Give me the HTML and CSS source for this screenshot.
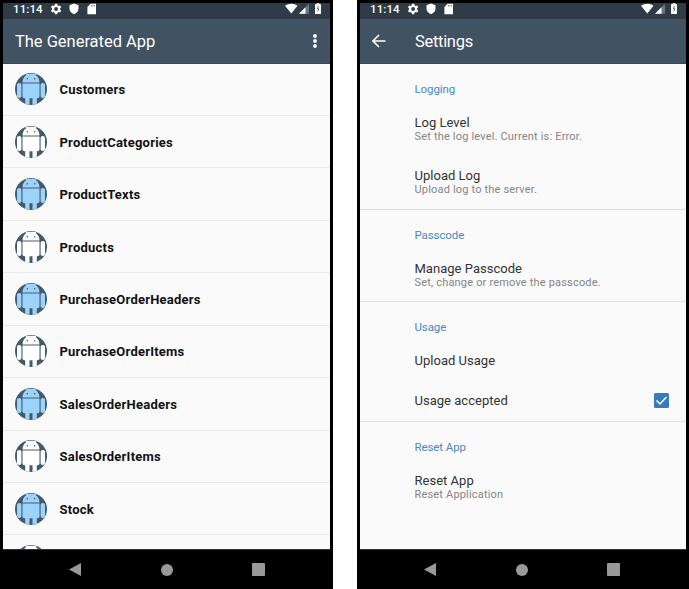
FILE: index.html
```html
<!DOCTYPE html>
<html lang="en">
<head>
<meta charset="utf-8">
<title>The Generated App</title>
<link rel="stylesheet" href="styles.css">
</head>
<body>
<svg width="0" height="0" class="defs">
  <defs>
    <clipPath id="disc"><circle cx="16" cy="16" r="16"/></clipPath>
    <symbol id="droid" viewBox="0 0 32 32">
      <g clip-path="url(#disc)">
        <rect width="32" height="32" fill="#445a6c"/>
        <path fill="currentColor" d="M7.500 9.600C7.500 6 9.200 3.300 11.400 2L10 .8h12L20.600 2c2.200 1.300 3.900 4 3.900 7.600zM7.500 10.600h17v12.800q0 1.800-2 1.800h-.7V32h-4.300v-6.800h-3V32h-4.300v-6.800H9.500q-2 0-2-1.800zM2 11.700q0-1.700 2.200-1.700t2.200 1.700v11.500q0 1.800-2.200 1.800T2 23.200zM25.600 11.700q0-1.700 2.200-1.700t2.200 1.700v11.500q0 1.800-2.200 1.800t-2.200-1.800z"/>
        <circle cx="12.300" cy="5.800" r=".8" fill="#445a6c"/><circle cx="19.700" cy="5.800" r=".8" fill="#445a6c"/>
      </g>
    </symbol>
    <symbol id="left-status" viewBox="0 0 84 15">
      <path fill="#fff" fill-rule="evenodd" d="M42 .8h2.200l.4 1.500 1 .6 1.500-.5 1.100 1.900-1.100 1.100v1.200l1.100 1.100-1.100 1.900-1.500-.5-1 .6-.4 1.500H42l-.4-1.500-1-.6-1.500.5L38 7.700l1.100-1.100V5.400L38 4.300l1.100-1.900 1.500.5 1-.6zM43.100 4.100a1.900 1.900 0 1 0 0 3.800 1.900 1.900 0 0 0 0-3.800z"/>
      <path fill="#fff" d="M61 .6l4.500 1.700v3.500c0 2.500-1.900 4.600-4.500 5.500-2.600-.9-4.500-3-4.500-5.500V2.300z"/>
      <path fill="#fff" d="M77.600.8H83v10.400h-8.600V4z"/><path d="M78.500 2v1.500M80 2v1.500M81.500 2v1.500" stroke="#2f3b46" stroke-width=".6"/>
    </symbol>
    <symbol id="right-status" viewBox="0 0 40 15">
      <path fill="#fff" d="M0 2.800C3.500.2 9-.2 12.500 2.800L6.300 10.500z"/>
      <path fill="#6d7780" d="M24 .8v10H14z"/><path fill="#fff" d="M20.500 4.300v6.500H14z"/>
      <path fill="#fff" d="M31.500.2h3v1h1.500v9.800h-6V1.200h1.500z"/><path d="M33.500 3l-1.200 2.800h1.600L32.700 8.400" fill="none" stroke="#2f3b46" stroke-width=".7"/>
    </symbol>
  </defs>
</svg>
<main class="stage">
  <section class="phone">
    <div class="status"><span class="clock">11:14</span><svg class="sl"><use href="#left-status"/></svg><svg class="sr"><use href="#right-status"/></svg></div>
    <header class="bar"><h1 class="t-app">The Generated App</h1><svg class="more" viewBox="0 0 6 16"><g fill="#fff"><circle cx="3" cy="3" r="1.900"/><circle cx="3" cy="8" r="1.900"/><circle cx="3" cy="13" r="1.900"/></g></svg></header>
    <ul class="list">
      <li><svg class="droid blue"><use href="#droid"/></svg><span>Customers</span></li>
      <li><svg class="droid"><use href="#droid"/></svg><span>ProductCategories</span></li>
      <li><svg class="droid blue"><use href="#droid"/></svg><span>ProductTexts</span></li>
      <li><svg class="droid"><use href="#droid"/></svg><span>Products</span></li>
      <li><svg class="droid blue"><use href="#droid"/></svg><span>PurchaseOrderHeaders</span></li>
      <li><svg class="droid"><use href="#droid"/></svg><span>PurchaseOrderItems</span></li>
      <li><svg class="droid blue"><use href="#droid"/></svg><span>SalesOrderHeaders</span></li>
      <li><svg class="droid"><use href="#droid"/></svg><span>SalesOrderItems</span></li>
      <li><svg class="droid blue"><use href="#droid"/></svg><span>Stock</span></li>
      <li><svg class="droid"><use href="#droid"/></svg></li>
    </ul>
    <nav class="nav"><i class="back"></i><i class="home"></i><i class="recent"></i></nav>
  </section>
  <section class="phone">
    <div class="status"><span class="clock">11:14</span><svg class="sl"><use href="#left-status"/></svg><svg class="sr"><use href="#right-status"/></svg></div>
    <header class="bar"><svg class="arrow" viewBox="0 0 14 14"><path d="M13.500 7H1.500M7 1L1 7l6 6" fill="none" stroke="#fff" stroke-width="1.600"/></svg><h1 class="t-set">Settings</h1></header>
    <div class="settings">
      <section class="group g1"><h2>Logging</h2>
        <div class="item"><b>Log Level</b><p>Set the log level. Current is: Error.</p></div>
        <div class="item"><b>Upload Log</b><p>Upload log to the server.</p></div></section>
      <section class="group g2"><h2>Passcode</h2>
        <div class="item"><b>Manage Passcode</b><p>Set, change or remove the passcode.</p></div></section>
      <section class="group g3"><h2>Usage</h2>
        <div class="item single"><b>Upload Usage</b></div>
        <div class="item single check"><b>Usage accepted</b><svg class="box" viewBox="0 0 15 15"><rect width="15" height="15" rx="1.500" fill="#387bba"/><path d="M2.500 7.500l3.500 3.400 6.500-6.800" fill="none" stroke="#fff" stroke-width="1.500"/></svg></div></section>
      <section class="group g4"><h2>Reset App</h2>
        <div class="item"><b>Reset App</b><p>Reset Application</p></div></section>
    </div>
    <nav class="nav"><i class="back"></i><i class="home"></i><i class="recent"></i></nav>
  </section>
</main>
</body>
</html>
```
FILE: styles.css
```css
* { box-sizing: border-box; }
body { margin: 0; background: #fff; font-family: Roboto, "Noto Sans", sans-serif; overflow: hidden; }
h1, h2, p, ul { margin: 0; padding: 0; font-weight: 400; }
svg { display: block; flex: none; }
.defs { position: absolute; }
.stage { display: flex; gap: 24px; width: 690px; height: 589px; }
.phone { display: flex; flex-direction: column; flex: none; width: 333px; height: 589px; padding: 3px 3px 0; background: #000; white-space: nowrap; }
.phone + .phone { padding-right: 4px; }
.status { display: flex; height: 15.500px; flex: none; background: #2f3b46; color: #fff; }
.clock { flex: none; width: 35px; padding-left: 10px; font-size: 11.500px; font-weight: 500; line-height: 13px; letter-spacing: .1px; }
.sl { width: 84px; height: 15px; margin-left: -25px; }
.sr { width: 40px; height: 15px; margin-left: auto; margin-right: 5px; }
.bar { display: flex; align-items: center; height: 45px; flex: none; padding: 0 12px; background: #415262; border-bottom: 1px solid #33475a; color: #fff; }
.bar h1 { padding-top: 2px; font-size: 16.500px; line-height: 20px; letter-spacing: -.03px; }
.more { width: 6px; height: 16px; margin-left: auto; }
.arrow { width: 14px; height: 14px; }
.bar .t-set { margin-left: 29px; letter-spacing: -.3px; }
.list { flex: 1; overflow: hidden; list-style: none; background: #fafafa; }
.list li { display: flex; align-items: center; height: 52.450px; padding-left: 11.500px; border-bottom: 1px solid #e7e7e7; font-size: 13px; font-weight: 700; letter-spacing: .23px; color: #111; }
.list span { padding-top: 1px; }
.droid { width: 32px; height: 32px; margin-right: 13px; color: #fff; }
.blue { color: #9bd3fb; }
.settings { flex: 1; overflow: hidden; background: #fafafa; }
.group { padding: 17px 17px 0 54.500px; border-bottom: 1px solid #dedede; }
.group h2 { height: 17px; font-size: 11.500px; line-height: 16px; letter-spacing: -.1px; color: #4a88c4; }
.item { padding-top: 17px; height: 53.500px; }
.item b { display: block; font-size: 13px; font-weight: 400; line-height: 16px; letter-spacing: .02px; color: #333; }
.item p { margin-top: -1px; font-size: 11px; line-height: 13px; letter-spacing: .18px; color: #858585; }
.g1 { height: 146px; }
.g2 { height: 92px; }
.g3 { height: 120px; }
.g4 { border: 0; }
.item.single { height: 40.500px; }
.check { display: flex; justify-content: space-between; }
.box { width: 15px; height: 15px; }
.nav { display: flex; height: 40px; flex: none; align-items: center; padding-left: 66px; border-top: 1px solid #333; background: #000; }
.phone + .phone .nav { padding-left: 64px; }
.nav i { background: #999; height: 13px; }
.back { width: 12px; clip-path: polygon(0 50%, 100% 0, 100% 100%); }
.home { width: 12px; margin-left: 80px; border-radius: 50%; }
.nav .home { height: 12px; }
.recent { width: 13px; margin-left: 79px; border-radius: 1px; }
```
